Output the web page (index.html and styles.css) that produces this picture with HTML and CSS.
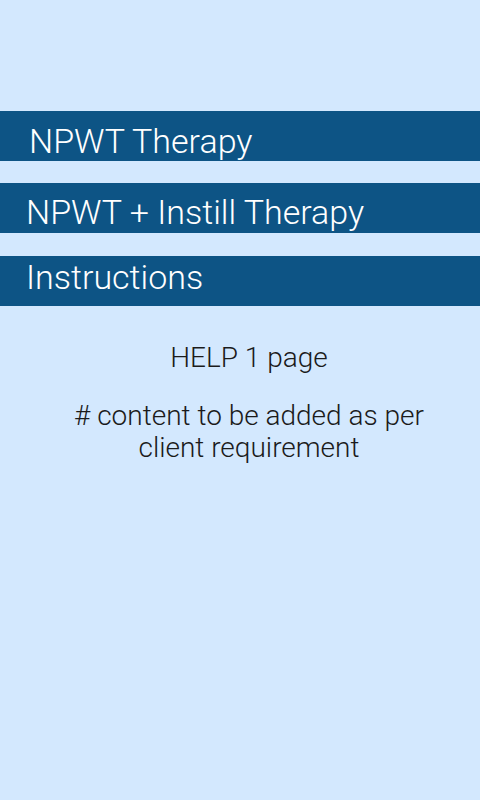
FILE: index.html
```html
<!DOCTYPE html>
<html>
<head>
<meta charset="utf-8">
<link rel="stylesheet" href="styles.css">
</head>
<body>
<div class="screen">
  <nav class="menu">
    <div class="bar bar-first"><span class="label label-first">NPWT Therapy</span></div>
    <div class="bar bar-second"><span class="label">NPWT + Instill Therapy</span></div>
    <div class="bar bar-third"><span class="label">Instructions</span></div>
  </nav>
  <section class="help">
    <p class="help-title">HELP 1 page</p>
    <p class="help-body"># content to be added as per<br>client requirement</p>
  </section>
</div>
</body>
</html>
```

FILE: styles.css
```css
html, body {
  margin: 0;
  padding: 0;
  background: #d3e8fe;
}
.screen {
  width: 480px;
  height: 800px;
  background: #d3e8fe;
  font-family: Roboto, "Noto Sans", sans-serif;
  font-weight: 300;
  padding-top: 111px;
  box-sizing: border-box;
}
.menu {
  display: flex;
  flex-direction: column;
}
.bar {
  height: 50px;
  background: #0d5485;
  color: #ffffff;
  font-size: 34px;
  box-sizing: border-box;
  padding-left: 26px;
  line-height: 34px;
  white-space: nowrap;
}
.bar-first { padding-top: 13px; }
.bar-first .label-first { margin-left: 3px; }
.bar-second { margin-top: 22px; padding-top: 12px; }
.bar-third { margin-top: 23px; padding-top: 4px; }
.label { display: block; }
.help {
  text-align: center;
  color: #1b1b1b;
  font-size: 28px;
  padding-left: 18px;
  margin-top: 36px;
}
.help p { margin: 0; }
.help-title { line-height: 32px; }
.help-body { margin-top: 26px !important; line-height: 32px; }
```
